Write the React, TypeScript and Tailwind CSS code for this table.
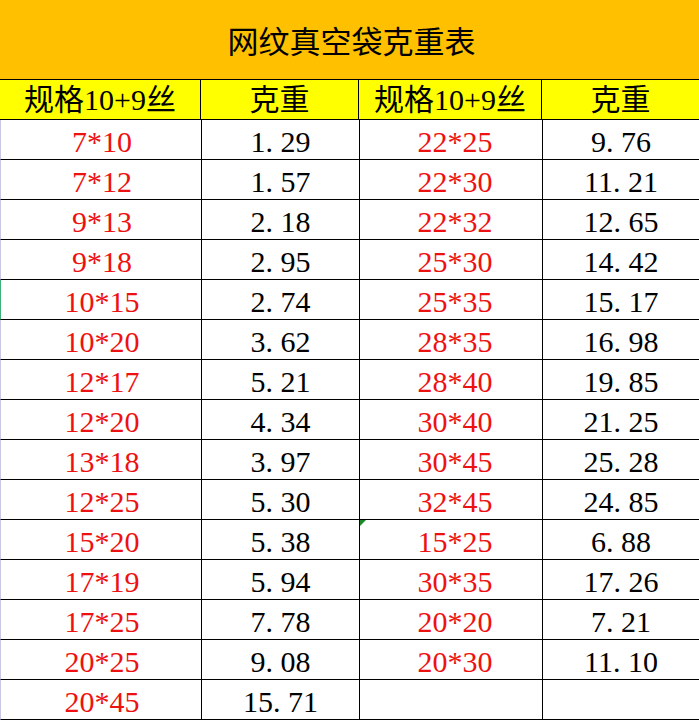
const rows: [string, string, string, string][] = [
  ['7*10', '1.29', '22*25', '9.76'],
  ['7*12', '1.57', '22*30', '11.21'],
  ['9*13', '2.18', '22*32', '12.65'],
  ['9*18', '2.95', '25*30', '14.42'],
  ['10*15', '2.74', '25*35', '15.17'],
  ['10*20', '3.62', '28*35', '16.98'],
  ['12*17', '5.21', '28*40', '19.85'],
  ['12*20', '4.34', '30*40', '21.25'],
  ['13*18', '3.97', '30*45', '25.28'],
  ['12*25', '5.30', '32*45', '24.85'],
  ['15*20', '5.38', '15*25', '6.88'],
  ['17*19', '5.94', '30*35', '17.26'],
  ['17*25', '7.78', '20*20', '7.21'],
  ['20*25', '9.08', '20*30', '11.10'],
  ['20*45', '15.71', '', ''],
];

// SimSun-style half-width period: keep "1.29" as text, pad the dot to half an em
function Weight({ value }: { value: string }) {
  if (!value) return null;
  const [a, b] = value.split('.');
  return (
    <>
      {a}
      <span className="inline-block w-[0.5em] text-left">.</span>
      {b}
    </>
  );
}

export default function App() {
  return (
    <div className="w-[699px] h-[721px] overflow-hidden bg-white text-[30px] font-['Liberation_Serif','Noto_Sans_CJK_SC',serif]">
      {/* title band */}
      <div className="h-[80px] bg-[#ffc000] border-b border-black flex justify-center">
        <span className="text-[31px] leading-[79px] pt-[3px] pl-[4px] text-black">网纹真空袋克重表</span>
      </div>

      {/* column header */}
      <div className="grid grid-cols-[201px_158px_183px_1fr] bg-[#ffff00] h-[40px] border-b border-black">
        {['规格10+9丝', '克重', '规格10+9丝', '克重'].map((t, i) => (
          <div
            key={i}
            className={`text-center leading-[34px] pt-[3px] ${i < 3 ? 'border-r border-black' : ''}`}
          >
            {t}
          </div>
        ))}
      </div>

      {/* data rows */}
      {rows.map((r, i) => (
        <div
          key={i}
          className={`relative grid grid-cols-[201px_158px_183px_1fr] h-[40px] border-b border-black border-l ${
            i === 4 ? 'border-l-[#3fb07a]' : 'border-l-[#c8c8e4]'
          }`}
        >
          <div className="text-center leading-[34px] pt-[5px] border-r border-black text-[#ee1111] pl-[2px]">{r[0]}</div>
          <div className="text-center leading-[34px] pt-[5px] border-r border-black text-black">
            <Weight value={r[1]} />
          </div>
          <div className="relative text-center leading-[34px] pt-[5px] border-r border-black text-[#ee1111] pl-[8px]">
            {r[2]}
            {i === 10 && (
              <span className="absolute left-0 top-0 w-0 h-0 border-t-[6px] border-t-[#1a8a2a] border-r-[6px] border-r-transparent" />
            )}
          </div>
          <div className="text-center leading-[34px] pt-[5px] text-black">
            <Weight value={r[3]} />
          </div>
        </div>
      ))}
    </div>
  );
}
